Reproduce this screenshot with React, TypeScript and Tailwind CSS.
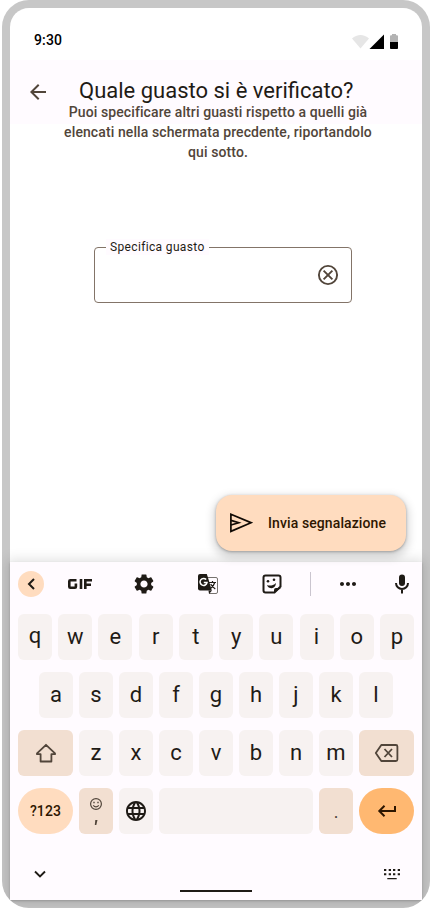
import React from "react";
import { MdArrowBack, MdSettings, MdMoreHoriz, MdLanguage } from "react-icons/md";

function Key({ children, lift = false }: { children?: React.ReactNode; lift?: boolean }) {
  return (
    <div className="flex h-[46px] w-[34px] shrink-0 items-center justify-center rounded-md bg-[#f7f2f1] text-[22px] leading-7 text-[#1f1b16]">
      <span className={lift ? "-mt-0.5" : ""}>{children}</span>
    </div>
  );
}

function StatusIcons() {
  return (
    <svg width="46" height="16" viewBox="0 0 46 16">
      <path d="M8.500 14.500 0 4.600C4.800-.1 12.200-.1 17 4.600Z" fill="#e6e6e6" />
      <path d="M17.500 15H32V.5Z" fill="#000" />
      <path d="M38 2.200c0-.5.4-.9.9-.9H40V0h4v1.300h1.100c.5 0 .9.4.9.9V8h-8Z" fill="#b3b3b3" />
      <path d="M38 8h8v6.200c0 .5-.4.8-.9.8h-6.200c-.5 0-.9-.3-.9-.8Z" fill="#000" />
    </svg>
  );
}

function Toolbar() {
  return (
    <div className="flex h-[44px] items-center pl-2">
      <div className="flex size-[26px] items-center justify-center rounded-full bg-[#ffdcbf]">
        <svg width="10" height="14" viewBox="0 0 10 14" fill="none" stroke="#1f1b16" strokeWidth="2">
          <path d="M8 2 3 7l5 5" />
        </svg>
      </div>
      <svg className="ml-6" width="24" height="24" viewBox="0 0 24 24" fill="none" stroke="#1f1b16" strokeWidth="2.600">
        <path d="M8.500 8.300H2.300q-1 0-1 1v5.400q0 1 1 1h4.600q1 0 1-1v-3.200M13 7v10M17.300 17V8.300H24M17.300 12.700H23" />
      </svg>
      <MdSettings className="ml-10 text-[#1f1b16]" size={24} />
      <svg className="ml-10" width="24" height="24" viewBox="0 0 24 24">
        <path d="M10 5.500h10q1.500 0 1.500 1.500v13q0 1.500-1.500 1.500h-7" fill="#fffbff" stroke="#77736f" />
        <path d="M4 2h6.800l1 3 4 13.500H4q-2 0-2-2V4q0-2 2-2Z" fill="#1f1b16" />
        <path d="M10.200 7.600A3.500 3.500 0 1 0 11 10.500H7.800" fill="none" stroke="#fff" strokeWidth="1.500" />
        <path d="M12.500 18.500h3.600L13 22Z" fill="#1f1b16" />
        <path d="M13 10.500h7M16.500 9v1.500M18.700 10.500c-.6 2.400-2 4.200-4 5.800M14.700 12c1 2 2.700 3.700 4.600 4.900" fill="none" stroke="#1f1b16" strokeWidth="1.200" />
      </svg>
      <svg className="ml-10" width="24" height="24" viewBox="0 0 24 24" fill="none" stroke="#1f1b16" strokeWidth="2">
        <path d="M14.500 20.500H5.500q-2 0-2-2v-13q0-2 2-2h13q2 0 2 2v9l-6 6Z" />
        <path d="M14 21v-3q0-2 2-2h5Z" fill="#1f1b16" stroke="none" />
        <path d="M7 13c2.500 1.200 6.200.7 9-2-.3 3.400-2 5.200-4.300 5.200S7.800 15.200 7 13Z" fill="#1f1b16" stroke="none" />
        <circle cx="8" cy="9.300" r="1.300" fill="#1f1b16" stroke="none" />
        <circle cx="14" cy="7.800" r="1.300" fill="#1f1b16" stroke="none" />
      </svg>
      <div className="ml-[26px] h-6 w-px bg-[#cac5cf]" />
      <MdMoreHoriz className="ml-[25px] text-[#1f1b16]" size={24} />
      <svg className="ml-[30px]" width="24" height="24" viewBox="0 0 24 24" fill="none" stroke="#1f1b16" strokeWidth="2">
        <rect x="9" y="2.500" width="6" height="11.500" rx="3" fill="#1f1b16" stroke="none" />
        <path d="M6 11a6 6 0 0 0 12 0M12 17v4.500" />
      </svg>
    </div>
  );
}

function Keyboard() {
  return (
    <div className="h-[338px] bg-[#fffbff] shadow-[0_1px_2px_rgba(0,0,0,0.18),0_1px_12px_3px_rgba(0,0,0,0.13)]">
      <Toolbar />
      <div className="mt-2 flex flex-col gap-3 px-2">
        <div className="flex justify-between">
          {"qwertyuiop".split("").map((c) => <Key key={c} lift={c === "q"}>{c}</Key>)}
        </div>
        <div className="flex gap-1.5 pl-[21px]">
          {"asdfghjkl".split("").map((c) => <Key key={c}>{c}</Key>)}
        </div>
        <div className="flex gap-1.5">
          <div className="flex h-[46px] w-[55px] items-center justify-center rounded-md bg-[#f2dfd1]">
            <svg width="24" height="24" viewBox="0 0 24 24" fill="none" stroke="#51453a" strokeWidth="1.800" strokeLinejoin="round">
              <path d="M12 3.800 3 12.300v.9h3.600v7.300h10.800v-7.300H21v-.9Z" />
            </svg>
          </div>
          {"zxcvbnm".split("").map((c) => <Key key={c}>{c}</Key>)}
          <div className="flex h-[46px] w-[55px] items-center justify-center rounded-md bg-[#f2dfd1] text-[#51453a]">
            <svg width="26" height="24" viewBox="0 0 26 24" fill="none" stroke="currentColor" strokeWidth="1.800" strokeLinejoin="round">
              <path d="M7.300 4h14.600q1.500 0 1.500 1.500v13q0 1.500-1.500 1.500H7.300L1.800 12Z" />
              <path d="m10.500 8 7.500 8M18 8l-7.500 8" />
            </svg>
          </div>
        </div>
        <div className="flex gap-1.5">
          <div className="flex h-[46px] w-[55px] items-center justify-center rounded-[23px] bg-[#ffdcbf] text-sm font-medium tracking-[0.1px] text-[#2d1600]">?123</div>
          <div className="flex h-[46px] w-[34px] flex-col items-center rounded-md bg-[#f2dfd1] pt-[9px] text-[#51453a]">
            <svg width="14" height="14" viewBox="0 0 14 14" fill="none" stroke="currentColor" strokeWidth="1.200">
              <circle cx="7" cy="7" r="5.400" />
              <path d="M4.200 8.300q2.800 3.200 5.600 0" />
              <path d="M4.300 5.400h1.400M8.300 5.400h1.400" strokeWidth="1.500" />
            </svg>
            <svg className="mt-[9px]" width="4" height="6" viewBox="0 0 4 6"><path d="M1.300 0h2.200L2.300 5H.8Z" fill="currentColor" /></svg>
          </div>
          <div className="flex h-[46px] w-[34px] items-center justify-center rounded-md bg-[#f7f2f1] text-[#1f1b16]">
            <MdLanguage size={24} />
          </div>
          <div className="h-[46px] w-[154px] rounded-md bg-[#f7f2f1]" />
          <div className="flex h-[46px] w-[34px] justify-center rounded-md bg-[#f2dfd1] pt-3 text-lg leading-6 text-[#51453a]">.</div>
          <div className="flex h-[46px] w-[55px] items-center justify-center rounded-[23px] bg-[#ffb871]">
            <svg width="24" height="24" viewBox="0 0 24 24" fill="none" stroke="#2d1600" strokeWidth="2">
              <path d="M20 7v5H4.500M9.500 6.800 4.300 12l5.200 5.200" />
            </svg>
          </div>
        </div>
      </div>
      <div className="mt-7 flex h-6 items-center justify-between px-[18px]">
        <svg width="24" height="24" viewBox="0 0 24 24" fill="none" stroke="#1f1b16" strokeWidth="1.900"><path d="m7 9.500 5 5 5-5" /></svg>
        <svg width="24" height="24" viewBox="0 0 24 24" fill="#1f1b16">
          <path d="M4 7h2.300v2H4zM8.700 7H11v2H8.700zM13 7h2.300v2H13zM17.700 7H20v2h-2.300zM4 11.300h2.300v2H4zM8.700 11.300H11v2H8.700zM13 11.300h2.300v2H13zM17.700 11.300H20v2h-2.300zM7.300 16h9.400v1.200H7.300z" />
        </svg>
      </div>
      <div className="mx-auto mt-1 h-0.5 w-[72px] bg-[#1f1b16]" />
    </div>
  );
}

export default function App() {
  return (
    <div className="h-[908px] w-[432px] overflow-hidden bg-white px-0.5 font-[Roboto,sans-serif]">
      <div className="h-[908px] w-[428px] overflow-hidden rounded-[27px] bg-[#c7c7c7] p-2">
        <div className="flex h-[554px] flex-col rounded-t-[19px] bg-white">
          <div className="flex h-[52px] shrink-0 items-start justify-between px-6 pt-[26px]">
            <span className="-mt-1 text-sm leading-5 font-medium tracking-[0.14px] text-black">9:30</span>
            <StatusIcons />
          </div>
          <div className="flex h-16 shrink-0 items-center bg-[#fffbff] pl-4 text-[#51453a]">
            <MdArrowBack size={24} />
            <h1 className="ml-[29px] -mt-0.5 text-[22px] leading-7 whitespace-nowrap text-[#1f1b16]">Quale guasto si è verificato?</h1>
          </div>
          <p className="relative -mt-[22px] ml-[48px] w-80 text-center text-sm leading-5 font-medium tracking-[0.1px] text-[#51453a]">
            Puoi specificare altri guasti rispetto a quelli già<br />elencati nella schermata precdente, riportandolo<br />qui sotto.
          </p>
          <div className="mt-[85px] ml-[84px] flex h-14 w-[258px] shrink-0 items-center justify-between rounded-[4px] border border-[#837468] px-[11px]">
            <span className="-mt-[57px] w-[103px] bg-[#fffbff] px-1 text-xs leading-4 tracking-[0.35px] whitespace-nowrap text-[#1f1b16]">Specifica guasto</span>
            <svg width="24" height="24" viewBox="0 0 24 24" fill="none" stroke="#51453a" strokeWidth="1.900">
              <circle cx="12" cy="12" r="9.100" />
              <path d="m7.600 7.600 8.800 8.800M16.400 7.600l-8.800 8.800" />
            </svg>
          </div>
          <div className="mt-48 ml-[206px] flex h-14 w-[190px] shrink-0 items-center rounded-2xl bg-[#ffdcbf] pl-[13px] shadow-[0_1px_3px_rgba(0,0,0,0.3),0_4px_8px_3px_rgba(0,0,0,0.15)]">
            <svg width="24" height="24" viewBox="0 0 24 24" fill="none" stroke="#100a05" strokeWidth="1.700">
              <path d="M1.900 3.200v17.200L22 11.700Z" />
              <path d="M2 9.400l7.700 2.300L2 14" />
            </svg>
            <span className="ml-[15px] text-sm leading-5 font-medium tracking-[0.1px] whitespace-nowrap text-[#2d1600]">Invia segnalazione</span>
          </div>
        </div>
        <Keyboard />
      </div>
    </div>
  );
}
